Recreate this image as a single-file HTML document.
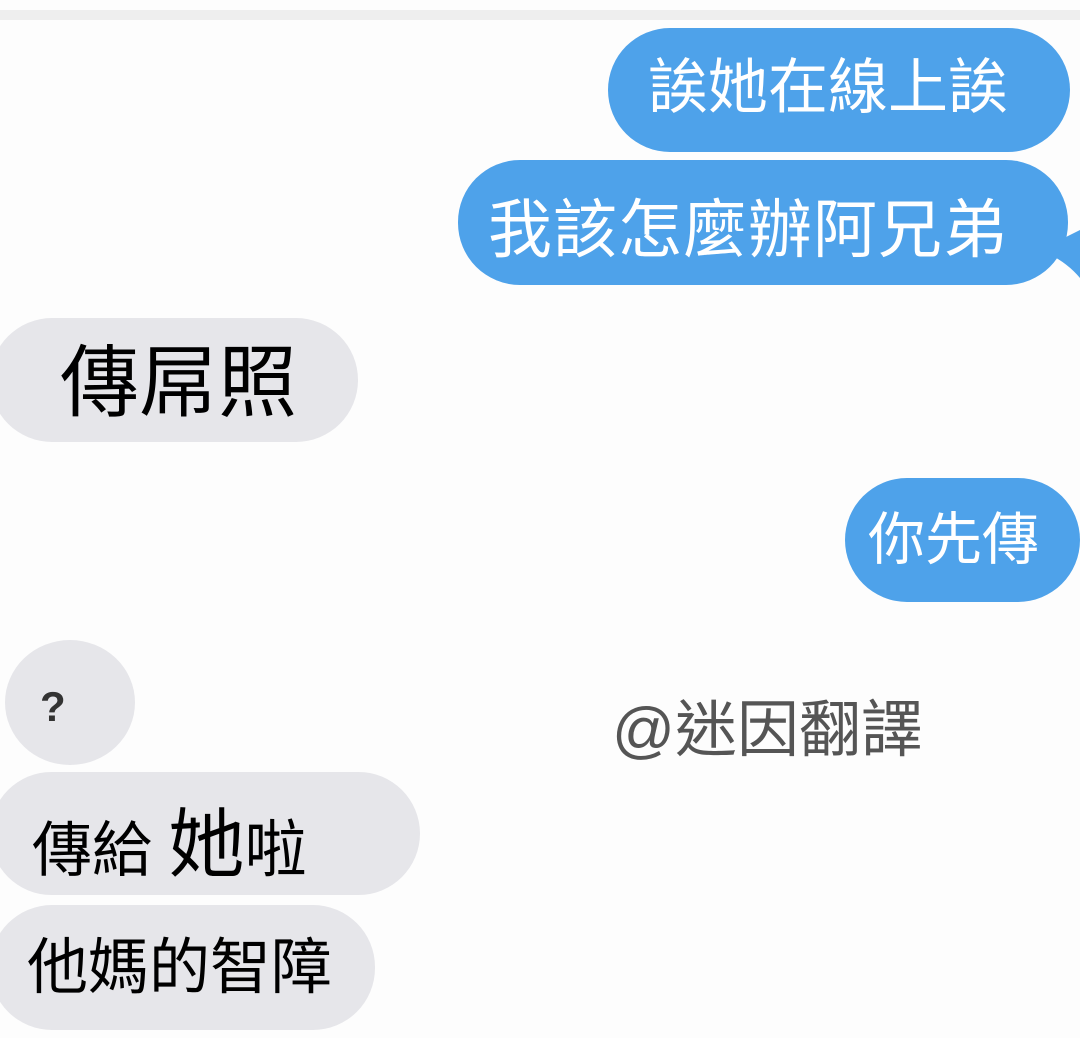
<!DOCTYPE html>
<html><head><meta charset="utf-8"><style>
body{margin:0;width:1080px;height:1038px;background:#fdfdfd;position:relative;overflow:hidden;font-family:"Liberation Sans","Noto Sans CJK TC",sans-serif}
.b{position:absolute;border-radius:62px}
.blue{background:#4ea2ea;color:#fff}
.gray{background:#e6e6ea;color:#111}
.t{position:absolute;white-space:nowrap;line-height:1}
</style></head><body>
<div style="position:absolute;left:0;top:10px;width:1080px;height:10px;background:#eeeeee"></div>
<div class="b blue" style="left:608px;top:28px;width:462px;height:124px"></div>
<div class="t" style="left:648px;top:58px;font-size:60px;color:#fff">誒她在線上誒</div>
<div class="b blue" style="left:458px;top:160px;width:610px;height:125px"></div>
<svg style="position:absolute;left:1040px;top:230px" width="40" height="60"><path d="M0 20 Q25 30 40 48 L40 0 Z" fill="#4ea2ea"/></svg>
<div class="t" style="left:488px;top:198px;font-size:64px;letter-spacing:1px;color:#fff">我該怎麼辦阿兄弟</div>
<div class="b gray" style="left:-10px;top:318px;width:368px;height:124px"></div>
<div class="t" style="left:60px;top:343px;font-size:79px">傳屌照</div>
<div class="b blue" style="left:845px;top:478px;width:235px;height:124px"></div>
<div class="t" style="left:868px;top:512px;font-size:57px;color:#fff">你先傳</div>
<div class="b gray" style="left:5px;top:640px;width:130px;height:125px;border-radius:50%"></div>
<div class="t" style="left:40px;top:686px;font-size:42px;font-weight:bold;color:#333">?</div>
<div class="t" style="left:612px;top:700px;font-size:62px;color:#555">@迷因翻譯</div>
<div class="b gray" style="left:-10px;top:772px;width:430px;height:123px"></div>
<div class="t" style="left:32px;top:808px;font-size:60px">傳給 <span style="font-size:76px">她</span><span style="font-size:62px">啦</span></div>
<div class="b gray" style="left:-10px;top:905px;width:385px;height:125px"></div>
<div class="t" style="left:27px;top:937px;font-size:61px">他媽的智障</div>
</body></html>
